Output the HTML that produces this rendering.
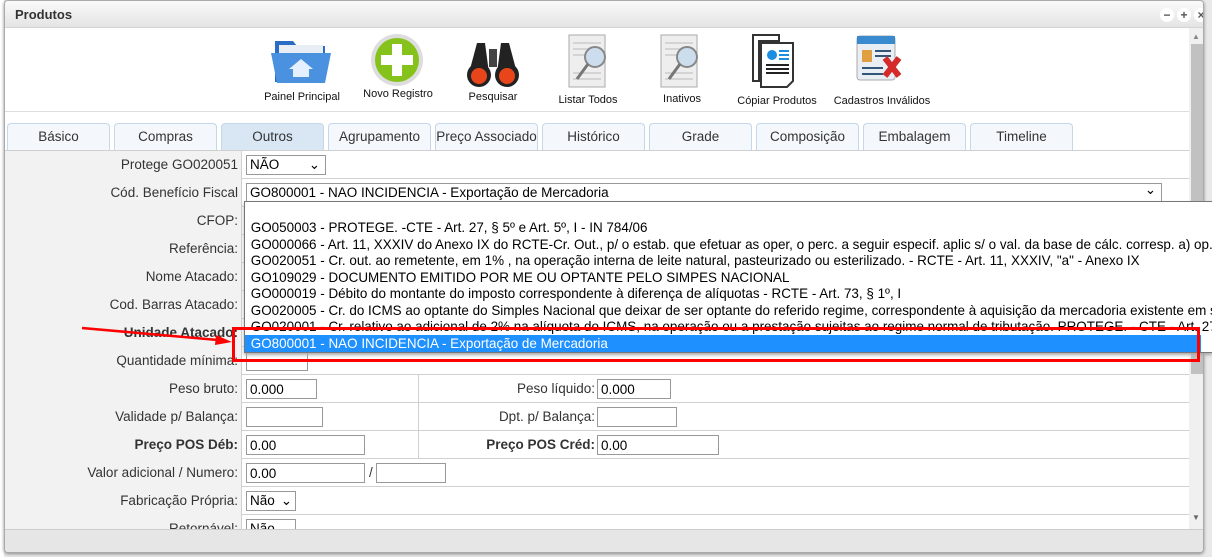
<!DOCTYPE html>
<html><head><meta charset="utf-8"><style>
*{box-sizing:border-box;margin:0;padding:0}
body{width:1212px;height:557px;overflow:hidden;background:#e9e9e9;font-family:"Liberation Sans",Arial,sans-serif;position:relative}
.abs{position:absolute}
.win{left:4px;top:0;width:1200px;height:553px;background:#fff;border:1px solid #aaa;border-radius:4px;overflow:hidden;box-shadow:0 1px 3px #888}
.title{left:0;top:0;width:1200px;height:27px;background:linear-gradient(#fafafa,#e4e4e4);border-bottom:1px solid #d4d4d4;font-size:13px;font-weight:bold;color:#333;padding:6px 0 0 10px}
.btn{width:14px;height:14px;border-radius:7px;background:#fff;top:7px;font-size:12px;font-weight:bold;color:#555;text-align:center;line-height:14px}
.tool{font-size:11px;color:#111;text-align:center;width:110px}
.tab{top:122px;height:28px;width:103px;background:#f4f8fc;border:1px solid #c5d7ea;border-bottom:none;border-radius:4px 4px 0 0;font-size:13.5px;color:#333;text-align:center;line-height:26px;white-space:nowrap}
.row{left:0;width:1184px;height:28px;border-bottom:1px solid #d0d0d0;font-size:13.5px;color:#333}
.lab{left:0;width:237px;height:28px;background:#f2f2f2;border-right:1px solid #d0d0d0;text-align:right;padding-right:3px;line-height:27px}
.lab2{left:413px;width:180px;height:28px;border-left:1px solid #d0d0d0;text-align:right;line-height:27px;padding-right:3px}
input.i,.sel{position:absolute;height:20px;border:1px solid #999;font-family:inherit;font-size:13.5px;padding-left:3px;line-height:18px;background:#fff;color:#000}
.opt{left:0;width:1100px;height:16.5px;font-size:14px;color:#000;padding-left:6px;white-space:nowrap;overflow:hidden;line-height:16px;transform-origin:left;transform:scaleX(.96)}
</style></head><body>
<div class="abs" style="left:0;top:0;width:4px;height:557px;background:#fff"></div>
<div class="abs win">
 <div class="abs title">Produtos</div>
 <div class="abs btn" style="left:1155px">&minus;</div>
 <div class="abs btn" style="left:1172px">+</div>
 <div class="abs btn" style="left:1189px">&times;</div>
 <svg class="abs" style="left:266px;top:36px" width="60" height="48" viewBox="0 0 60 48"><path d="M4 4h18l4 5h28v36H4z" fill="#2a6cc4"/><rect x="8" y="8" width="44" height="10" fill="#e8eef4"/><path d="M0 16h60l-6 30H6z" fill="#4a92e0"/><path d="M30 22l-12 10h4v8h16v-8h4z" fill="#e4efff"/></svg>
 <div class="abs tool" style="left:242px;top:90px">Painel Principal</div>
 <svg class="abs" style="left:365px;top:32px" width="54" height="54"><circle cx="27" cy="27" r="26" fill="#ddd"/><circle cx="27" cy="27" r="22" fill="#86c21c"/><rect x="22" y="11" width="10" height="32" fill="#fff"/><rect x="11" y="22" width="32" height="10" fill="#fff"/></svg>
 <div class="abs tool" style="left:338px;top:87px">Novo Registro</div>
 <svg class="abs" style="left:460px;top:34px" width="56" height="54"><path d="M12 8h8l4 30H4z M36 8h8l8 30H32z" fill="#222"/><circle cx="14" cy="40" r="12" fill="#222"/><circle cx="42" cy="40" r="12" fill="#222"/><circle cx="14" cy="41" r="8" fill="#e8461a"/><circle cx="42" cy="41" r="8" fill="#e8461a"/><rect x="24" y="14" width="8" height="18" fill="#444"/></svg>
 <div class="abs tool" style="left:433px;top:90px">Pesquisar</div>
 <svg class="abs" style="left:560px;top:32px" width="46" height="58"><rect x="4" y="2" width="36" height="52" fill="#eee" stroke="#aaa"/><g stroke="#bbb"><line x1="8" y1="10" x2="36" y2="10"/><line x1="8" y1="16" x2="36" y2="16"/><line x1="8" y1="22" x2="36" y2="22"/><line x1="8" y1="40" x2="36" y2="40"/><line x1="8" y1="46" x2="36" y2="46"/></g><circle cx="30" cy="24" r="10" fill="#cde" stroke="#888" stroke-width="2"/><line x1="23" y1="31" x2="12" y2="46" stroke="#777" stroke-width="3"/></svg>
 <div class="abs tool" style="left:528px;top:93px">Listar Todos</div>
 <svg class="abs" style="left:652px;top:32px" width="46" height="58"><rect x="4" y="2" width="36" height="52" fill="#eee" stroke="#aaa"/><g stroke="#bbb"><line x1="8" y1="10" x2="36" y2="10"/><line x1="8" y1="16" x2="36" y2="16"/><line x1="8" y1="22" x2="36" y2="22"/><line x1="8" y1="40" x2="36" y2="40"/><line x1="8" y1="46" x2="36" y2="46"/></g><circle cx="30" cy="24" r="10" fill="#cde" stroke="#888" stroke-width="2"/><line x1="23" y1="31" x2="12" y2="46" stroke="#777" stroke-width="3"/></svg>
 <div class="abs tool" style="left:622px;top:92px">Inativos</div>
 <svg class="abs" style="left:746px;top:32px" width="46" height="58"><path d="M2 2h26v6H8v40H2z" fill="#fff" stroke="#333" stroke-width="2"/><path d="M10 10h32v38l-6 6H10z" fill="#fff" stroke="#333" stroke-width="2"/><circle cx="21" cy="22" r="5" fill="#1a8ee0"/><g stroke="#1a8ee0" stroke-width="2"><line x1="28" y1="18" x2="38" y2="18"/><line x1="28" y1="22" x2="38" y2="22"/><line x1="28" y1="26" x2="38" y2="26"/></g><g stroke="#222" stroke-width="2"><line x1="15" y1="32" x2="38" y2="32"/><line x1="15" y1="36" x2="38" y2="36"/><line x1="15" y1="40" x2="38" y2="40"/></g></svg>
 <div class="abs tool" style="left:717px;top:94px">Cópiar Produtos</div>
 <svg class="abs" style="left:850px;top:33px" width="50" height="50"><rect x="2" y="2" width="38" height="44" rx="3" fill="#e8eef4" stroke="#aaa"/><rect x="2" y="2" width="38" height="8" fill="#3a8ad0"/><rect x="7" y="16" width="10" height="12" fill="#e0a040"/><g stroke="#357" stroke-width="2"><line x1="20" y1="17" x2="36" y2="17"/><line x1="20" y1="22" x2="36" y2="22"/><line x1="7" y1="34" x2="28" y2="34"/><line x1="7" y1="40" x2="28" y2="40"/></g><path d="M30 24l14 18M44 24l-14 18" stroke="#d42a2a" stroke-width="6"/></svg>
 <div class="abs tool" style="left:822px;top:94px">Cadastros Inválidos</div>
 <div class="abs" style="left:0;top:110px;width:1184px;height:1px;background:#ddd"></div>
 <div class="abs tab" style="left:2px">Básico</div>
 <div class="abs tab" style="left:109px">Compras</div>
 <div class="abs tab" style="left:216px;background:#d9e7f5">Outros</div>
 <div class="abs tab" style="left:323px">Agrupamento</div>
 <div class="abs tab" style="left:430px">Preço Associado</div>
 <div class="abs tab" style="left:537px">Histórico</div>
 <div class="abs tab" style="left:644px">Grade</div>
 <div class="abs tab" style="left:751px">Composição</div>
 <div class="abs tab" style="left:858px">Embalagem</div>
 <div class="abs tab" style="left:965px">Timeline</div>
 <div class="abs" style="left:0;top:149px;width:1184px;height:380px;border-top:1px solid #d0d0d0;overflow:hidden">
  <div class="abs row" style="top:0"><div class="abs lab">Protege GO020051</div><div class="sel" style="left:241px;top:4px;width:80px">NÃO<span style="position:absolute;right:5px">&#8964;</span></div></div>
  <div class="abs row" style="top:28px"><div class="abs lab">Cód. Benefício Fiscal</div><div class="sel" style="left:241px;top:4px;width:916px">GO800001 - NAO INCIDENCIA - Exportação de Mercadoria<span style="position:absolute;right:5px;top:-3px">&#8964;</span></div></div>
  <div class="abs row" style="top:56px"><div class="abs lab">CFOP:</div></div>
  <div class="abs row" style="top:84px"><div class="abs lab">Referência:</div></div>
  <div class="abs row" style="top:112px"><div class="abs lab">Nome Atacado:</div></div>
  <div class="abs row" style="top:140px"><div class="abs lab">Cod. Barras Atacado:</div></div>
  <div class="abs row" style="top:168px"><div class="abs lab" style="font-weight:bold">Unidade Atacado:</div></div>
  <div class="abs row" style="top:196px"><div class="abs lab">Quantidade mínima:</div><input class="i" style="left:241px;top:4px;width:62px"></div>
  <div class="abs row" style="top:224px"><div class="abs lab">Peso bruto:</div><input class="i" style="left:241px;top:4px;width:71px" value="0.000"><div class="abs lab2">Peso líquido:</div><input class="i" style="left:592px;top:4px;width:74px" value="0.000"></div>
  <div class="abs row" style="top:252px"><div class="abs lab">Validade p/ Balança:</div><input class="i" style="left:241px;top:4px;width:77px"><div class="abs lab2">Dpt. p/ Balança:</div><input class="i" style="left:592px;top:4px;width:80px"></div>
  <div class="abs row" style="top:280px"><div class="abs lab" style="font-weight:bold">Preço POS Déb:</div><input class="i" style="left:241px;top:4px;width:119px" value="0.00"><div class="abs lab2" style="font-weight:bold">Preço POS Créd:</div><input class="i" style="left:592px;top:4px;width:122px" value="0.00"></div>
  <div class="abs row" style="top:308px"><div class="abs lab">Valor adicional / Numero:</div><input class="i" style="left:241px;top:4px;width:119px" value="0.00"><span class="abs" style="left:364px;top:6px">/</span><input class="i" style="left:371px;top:4px;width:70px"></div>
  <div class="abs row" style="top:336px"><div class="abs lab">Fabricação Própria:</div><div class="sel" style="left:241px;top:4px;width:50px">Não<span style="position:absolute;right:3px">&#8964;</span></div></div>
  <div class="abs row" style="top:364px"><div class="abs lab">Retornável:</div><div class="sel" style="left:241px;top:4px;width:50px">Não</div></div>
 </div>
 <div class="abs" style="left:1184px;top:27px;width:16px;height:502px;background:#f0f0f0"></div>
 <div class="abs" style="left:1186px;top:43px;width:12px;height:330px;background:#c1c1c1"></div>
 <div class="abs" style="left:1187px;top:31px;font-size:8px;color:#888">&#9650;</div>
 <div class="abs" style="left:1187px;top:512px;font-size:8px;color:#666">&#9660;</div>
 <div class="abs" style="left:0;top:528px;width:1200px;height:25px;background:#e6e6e6;border-top:1px solid #ccc"></div>
</div>
<div class="abs" style="left:244px;top:201px;width:968px;height:152px;background:#fff;border:1px solid #777;border-right:none;overflow:hidden;box-shadow:0 2px 3px #aaa">
 <div class="abs opt" style="top:17px">GO050003 - PROTEGE. -CTE - Art. 27, § 5º e Art. 5º, I - IN 784/06</div>
 <div class="abs opt" style="top:33.5px">GO000066 - Art. 11, XXXIV do Anexo IX do RCTE-Cr. Out., p/ o estab. que efetuar as oper, o perc. a seguir especif. aplic s/ o val. da base de cálc. corresp. a) op. interna</div>
 <div class="abs opt" style="top:50px">GO020051 - Cr. out. ao remetente, em 1% , na operação interna de leite natural, pasteurizado ou esterilizado. - RCTE - Art. 11, XXXIV, "a" - Anexo IX</div>
 <div class="abs opt" style="top:66.5px">GO109029 - DOCUMENTO EMITIDO POR ME OU OPTANTE PELO SIMPES NACIONAL</div>
 <div class="abs opt" style="top:83px">GO000019 - Débito do montante do imposto correspondente à diferença de alíquotas - RCTE - Art. 73, § 1º, I</div>
 <div class="abs opt" style="top:99.5px">GO020005 - Cr. do ICMS ao optante do Simples Nacional que deixar de ser optante do referido regime, correspondente à aquisição da mercadoria existente em seu estoque</div>
 <div class="abs opt" style="top:116px">GO020001 - Cr. relativo ao adicional de 2% na alíquota do ICMS, na operação ou a prestação sujeitas ao regime normal de tributação. PROTEGE. - CTE - Art. 27, § 5º</div>
 <div class="abs" style="left:0;top:133px;width:956px;height:17px;background:#1e90ff"></div>
 <div class="abs opt" style="top:133px;color:#fff">GO800001 - NAO INCIDENCIA - Exportação de Mercadoria</div>
</div>
<div class="abs" style="left:232px;top:327px;width:968px;height:35px;border:3px solid #f00"></div>
<svg class="abs" style="left:78px;top:320px" width="160" height="30"><line x1="4" y1="8" x2="140" y2="20" stroke="#f00" stroke-width="2.5"/><path d="M154 22l-16-7 -1 10z" fill="#f00"/></svg>
</body></html>
